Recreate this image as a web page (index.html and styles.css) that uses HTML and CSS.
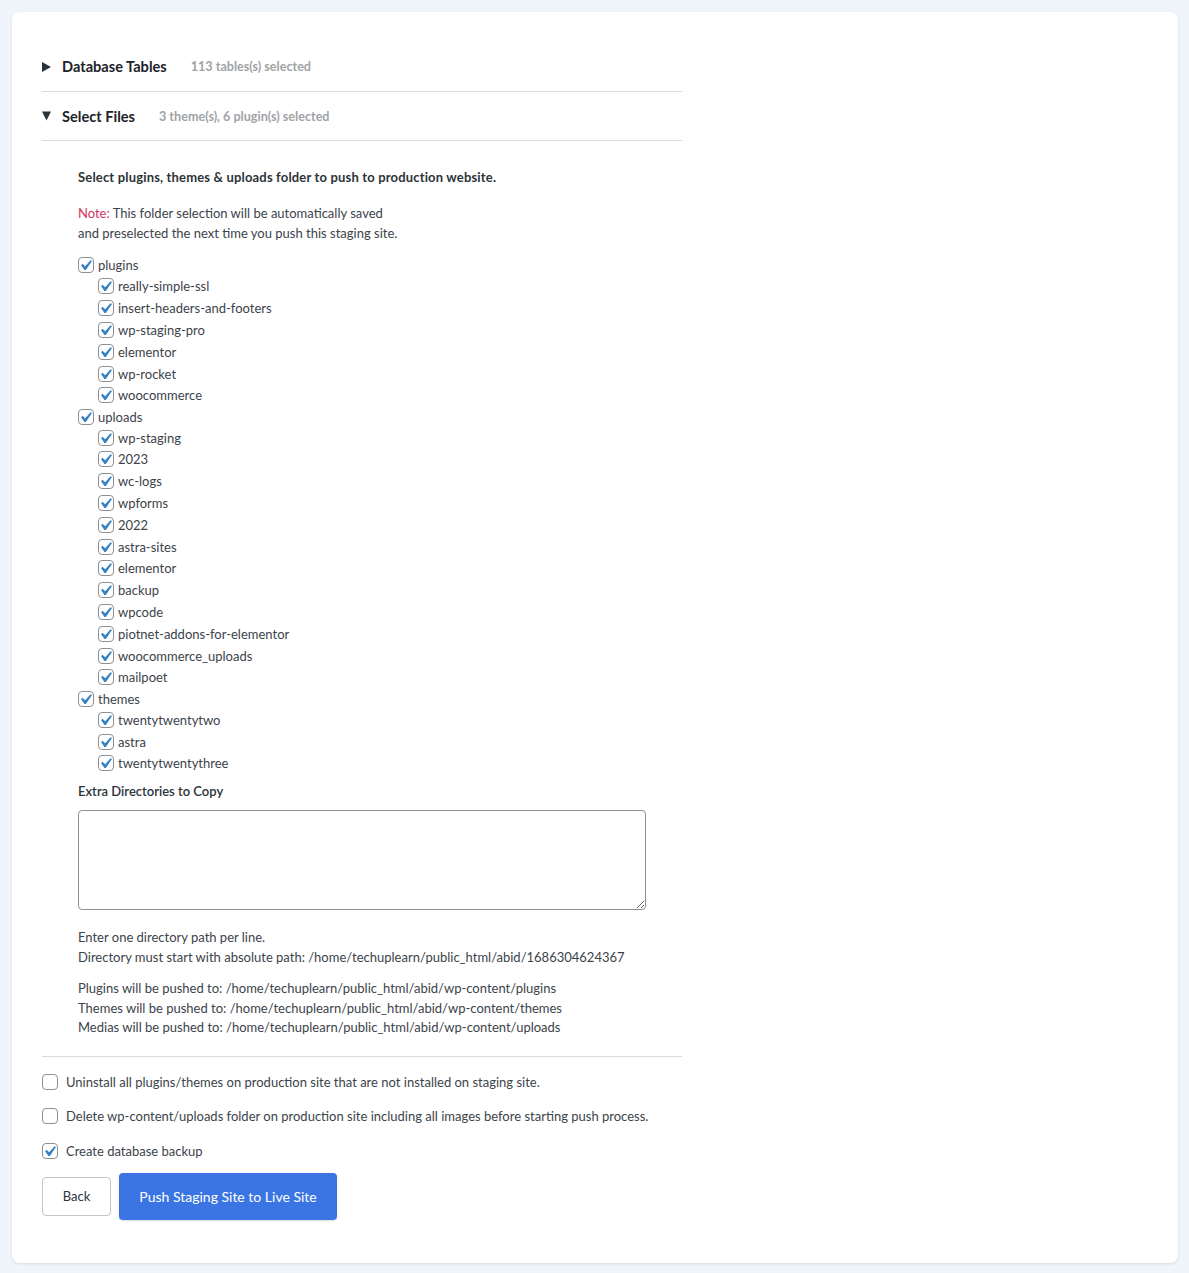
FILE: index.html
```html
<!DOCTYPE html>
<html lang="en">
<head>
<meta charset="utf-8">
<title>Push Staging Site</title>
<link rel="stylesheet" href="styles.css">
</head>
<body>
<div class="card">
  <div class="section-head first">
    <span class="caret"><svg viewBox="0 0 10 10"><polygon points="0,0 9,5 0,10"/></svg></span>
    <span class="title">Database Tables</span>
    <span class="meta">113 tables(s) selected</span>
  </div>
  <div class="section-head">
    <span class="caret"><svg viewBox="0 0 10 10"><polygon points="0,0.5 9,0.5 4.5,9.5"/></svg></span>
    <span class="title">Select Files</span>
    <span class="meta">3 theme(s), 6 plugin(s) selected</span>
  </div>

  <div class="files">
    <p class="lead">Select plugins, themes &amp; uploads folder to push to production website.</p>
    <p class="note"><span class="note-label">Note:</span> This folder selection will be automatically saved<br>and preselected the next time you push this staging site.</p>

    <ul class="tree">
      <li>
        <label class="row parent"><span class="cb checked"><svg viewBox="3.81 2.86 13.33 13.33"><path d="M14.83 4.89l1.34.94-5.81 8.38H9.02L5.78 9.67l1.34-1.25 2.57 2.4z"/></svg></span>plugins</label>
        <ul class="sub">
          <li><label class="row"><span class="cb checked"><svg viewBox="3.81 2.86 13.33 13.33"><path d="M14.83 4.89l1.34.94-5.81 8.38H9.02L5.78 9.67l1.34-1.25 2.57 2.4z"/></svg></span>really-simple-ssl</label></li>
          <li><label class="row"><span class="cb checked"><svg viewBox="3.81 2.86 13.33 13.33"><path d="M14.83 4.89l1.34.94-5.81 8.38H9.02L5.78 9.67l1.34-1.25 2.57 2.4z"/></svg></span>insert-headers-and-footers</label></li>
          <li><label class="row"><span class="cb checked"><svg viewBox="3.81 2.86 13.33 13.33"><path d="M14.83 4.89l1.34.94-5.81 8.38H9.02L5.78 9.67l1.34-1.25 2.57 2.4z"/></svg></span>wp-staging-pro</label></li>
          <li><label class="row"><span class="cb checked"><svg viewBox="3.81 2.86 13.33 13.33"><path d="M14.83 4.89l1.34.94-5.81 8.38H9.02L5.78 9.67l1.34-1.25 2.57 2.4z"/></svg></span>elementor</label></li>
          <li><label class="row"><span class="cb checked"><svg viewBox="3.81 2.86 13.33 13.33"><path d="M14.83 4.89l1.34.94-5.81 8.38H9.02L5.78 9.67l1.34-1.25 2.57 2.4z"/></svg></span>wp-rocket</label></li>
          <li><label class="row"><span class="cb checked"><svg viewBox="3.81 2.86 13.33 13.33"><path d="M14.83 4.89l1.34.94-5.81 8.38H9.02L5.78 9.67l1.34-1.25 2.57 2.4z"/></svg></span>woocommerce</label></li>
        </ul>
      </li>
      <li>
        <label class="row parent"><span class="cb checked"><svg viewBox="3.81 2.86 13.33 13.33"><path d="M14.83 4.89l1.34.94-5.81 8.38H9.02L5.78 9.67l1.34-1.25 2.57 2.4z"/></svg></span>uploads</label>
        <ul class="sub">
          <li><label class="row"><span class="cb checked"><svg viewBox="3.81 2.86 13.33 13.33"><path d="M14.83 4.89l1.34.94-5.81 8.38H9.02L5.78 9.67l1.34-1.25 2.57 2.4z"/></svg></span>wp-staging</label></li>
          <li><label class="row"><span class="cb checked"><svg viewBox="3.81 2.86 13.33 13.33"><path d="M14.83 4.89l1.34.94-5.81 8.38H9.02L5.78 9.67l1.34-1.25 2.57 2.4z"/></svg></span>2023</label></li>
          <li><label class="row"><span class="cb checked"><svg viewBox="3.81 2.86 13.33 13.33"><path d="M14.83 4.89l1.34.94-5.81 8.38H9.02L5.78 9.67l1.34-1.25 2.57 2.4z"/></svg></span>wc-logs</label></li>
          <li><label class="row"><span class="cb checked"><svg viewBox="3.81 2.86 13.33 13.33"><path d="M14.83 4.89l1.34.94-5.81 8.38H9.02L5.78 9.67l1.34-1.25 2.57 2.4z"/></svg></span>wpforms</label></li>
          <li><label class="row"><span class="cb checked"><svg viewBox="3.81 2.86 13.33 13.33"><path d="M14.83 4.89l1.34.94-5.81 8.38H9.02L5.78 9.67l1.34-1.25 2.57 2.4z"/></svg></span>2022</label></li>
          <li><label class="row"><span class="cb checked"><svg viewBox="3.81 2.86 13.33 13.33"><path d="M14.83 4.89l1.34.94-5.81 8.38H9.02L5.78 9.67l1.34-1.25 2.57 2.4z"/></svg></span>astra-sites</label></li>
          <li><label class="row"><span class="cb checked"><svg viewBox="3.81 2.86 13.33 13.33"><path d="M14.83 4.89l1.34.94-5.81 8.38H9.02L5.78 9.67l1.34-1.25 2.57 2.4z"/></svg></span>elementor</label></li>
          <li><label class="row"><span class="cb checked"><svg viewBox="3.81 2.86 13.33 13.33"><path d="M14.83 4.89l1.34.94-5.81 8.38H9.02L5.78 9.67l1.34-1.25 2.57 2.4z"/></svg></span>backup</label></li>
          <li><label class="row"><span class="cb checked"><svg viewBox="3.81 2.86 13.33 13.33"><path d="M14.83 4.89l1.34.94-5.81 8.38H9.02L5.78 9.67l1.34-1.25 2.57 2.4z"/></svg></span>wpcode</label></li>
          <li><label class="row"><span class="cb checked"><svg viewBox="3.81 2.86 13.33 13.33"><path d="M14.83 4.89l1.34.94-5.81 8.38H9.02L5.78 9.67l1.34-1.25 2.57 2.4z"/></svg></span>piotnet-addons-for-elementor</label></li>
          <li><label class="row"><span class="cb checked"><svg viewBox="3.81 2.86 13.33 13.33"><path d="M14.83 4.89l1.34.94-5.81 8.38H9.02L5.78 9.67l1.34-1.25 2.57 2.4z"/></svg></span>woocommerce_uploads</label></li>
          <li><label class="row"><span class="cb checked"><svg viewBox="3.81 2.86 13.33 13.33"><path d="M14.83 4.89l1.34.94-5.81 8.38H9.02L5.78 9.67l1.34-1.25 2.57 2.4z"/></svg></span>mailpoet</label></li>
        </ul>
      </li>
      <li>
        <label class="row parent"><span class="cb checked"><svg viewBox="3.81 2.86 13.33 13.33"><path d="M14.83 4.89l1.34.94-5.81 8.38H9.02L5.78 9.67l1.34-1.25 2.57 2.4z"/></svg></span>themes</label>
        <ul class="sub">
          <li><label class="row"><span class="cb checked"><svg viewBox="3.81 2.86 13.33 13.33"><path d="M14.83 4.89l1.34.94-5.81 8.38H9.02L5.78 9.67l1.34-1.25 2.57 2.4z"/></svg></span>twentytwentytwo</label></li>
          <li><label class="row"><span class="cb checked"><svg viewBox="3.81 2.86 13.33 13.33"><path d="M14.83 4.89l1.34.94-5.81 8.38H9.02L5.78 9.67l1.34-1.25 2.57 2.4z"/></svg></span>astra</label></li>
          <li><label class="row"><span class="cb checked"><svg viewBox="3.81 2.86 13.33 13.33"><path d="M14.83 4.89l1.34.94-5.81 8.38H9.02L5.78 9.67l1.34-1.25 2.57 2.4z"/></svg></span>twentytwentythree</label></li>
        </ul>
      </li>
    </ul>

    <p class="field-label">Extra Directories to Copy</p>
    <textarea class="dirs"></textarea>
    <p class="help">Enter one directory path per line.<br>Directory must start with absolute path: /home/techuplearn/public_html/abid/1686304624367</p>
    <p class="help paths">Plugins will be pushed to: /home/techuplearn/public_html/abid/wp-content/plugins<br>Themes will be pushed to: /home/techuplearn/public_html/abid/wp-content/themes<br>Medias will be pushed to: /home/techuplearn/public_html/abid/wp-content/uploads</p>
  </div>

  <div class="options">
    <label class="opt"><span class="cb"></span>Uninstall all plugins/themes on production site that are not installed on staging site.</label>
    <label class="opt"><span class="cb"></span>Delete wp-content/uploads folder on production site including all images before starting push process.</label>
    <label class="opt"><span class="cb checked"><svg viewBox="3.81 2.86 13.33 13.33"><path d="M14.83 4.89l1.34.94-5.81 8.38H9.02L5.78 9.67l1.34-1.25 2.57 2.4z"/></svg></span>Create database backup</label>
  </div>

  <div class="actions">
    <button class="btn">Back</button>
    <button class="btn primary">Push Staging Site to Live Site</button>
  </div>
</div>
</body>
</html>
```

FILE: styles.css
```css
* { box-sizing: border-box; }

html, body {
  margin: 0;
  padding: 0;
}

body {
  background: #f0f5fb;
  padding: 12px 11px 10px 12px;
  font-family: "Lato", "Open Sans", "Liberation Sans", sans-serif;
  font-size: 13px;
  color: #3c434a;
}

.card {
  background: #ffffff;
  border-radius: 8px;
  box-shadow: 0 1px 3px rgba(0, 0, 0, 0.10);
  padding: 30px 30px 43px 30px;
  min-height: 1251px;
}

.section-head {
  width: 640px;
  height: 49px;
  display: flex;
  align-items: center;
  border-bottom: 1px solid #dcdcde;
}

.section-head.first {
  height: 50px;
}

.caret {
  width: 20px;
  height: 10px;
  display: flex;
  align-items: center;
}

.caret svg {
  display: block;
  width: 10px;
  height: 10px;
  fill: #2c3338;
}

.title {
  font-weight: 700;
  font-size: 14.6px;
  color: #1d2327;
}

.meta {
  margin-left: 24px;
  font-size: 12.6px;
  font-weight: 700;
  color: #a0a3a6;
}

.files {
  width: 640px;
  padding: 26px 0 18px 36px;
  border-bottom: 1px solid #dcdcde;
}

.files p {
  margin: 0;
}

.lead {
  font-weight: 700;
  line-height: 20px;
  color: #2c3338;
  letter-spacing: 0.17px;
}

.note {
  margin-top: 17px !important;
  line-height: 19.5px;
}

.note-label {
  color: #d1345b;
}

.tree, .sub {
  list-style: none;
  margin: 0;
  padding: 0;
}

.tree {
  margin-top: 12px;
}

.sub {
  padding-left: 20px;
}

.row {
  display: flex;
  align-items: center;
  height: 21.8px;
}

.row.parent {
  height: 20.5px;
}

.cb {
  flex: none;
  width: 16px;
  height: 16px;
  border: 1px solid #8c8f94;
  border-radius: 4px;
  background: #fff;
  margin-right: 4px;
  display: inline-block;
}

.cb svg {
  display: block;
  width: 14px;
  height: 14px;
  fill: #3582c4;
}

.field-label {
  margin-top: 7px !important;
  font-weight: 600;
  line-height: 20px;
  color: #2c3338;
}

.dirs {
  display: block;
  margin-top: 9px;
  width: 568px;
  height: 100px;
  border: 1px solid #8c8f94;
  border-radius: 4px;
  background: #fff;
  resize: both;
}

.help {
  margin-top: 17px !important;
  line-height: 20px;
}

.help.paths {
  margin-top: 12px !important;
  line-height: 19.5px;
}

.options {
  display: flex;
  flex-direction: column;
  gap: 14.5px;
  padding-top: 15px;
}

.opt {
  display: flex;
  align-items: center;
  height: 20px;
}

.opt .cb {
  margin-right: 8px;
}

.actions {
  display: flex;
  align-items: center;
  gap: 8px;
  margin-top: 12px;
}

.btn {
  font-family: inherit;
  font-size: 13px;
  height: 39px;
  padding: 0;
  border: 1px solid #c3c4c7;
  border-radius: 4px;
  background: #fff;
  color: #2c3338;
  width: 69px;
}

.btn.primary {
  height: 47px;
  width: 218px;
  border: none;
  background: #3b75e3;
  color: #fff;
  font-size: 14px;
  box-shadow: 0 1px 2px rgba(0, 0, 0, 0.15);
}
```
